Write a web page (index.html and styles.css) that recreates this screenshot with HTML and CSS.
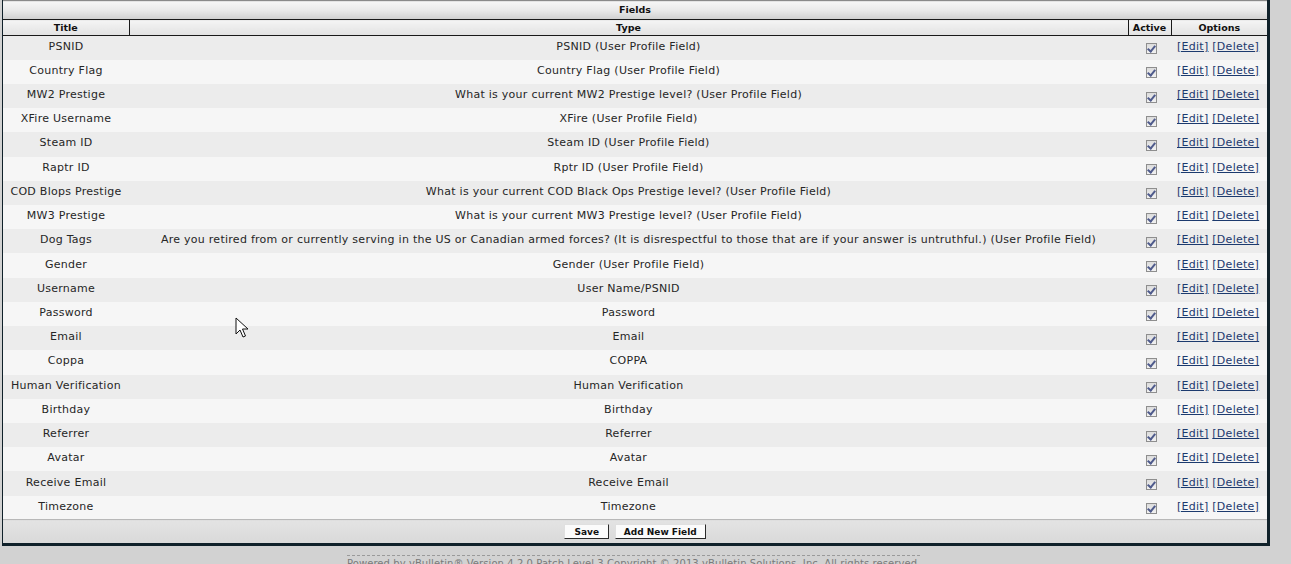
FILE: index.html
```html
<!DOCTYPE html>
<html>
<head>
<meta charset="utf-8">
<link rel="stylesheet" href="styles.css">
</head>
<body>
<div class="panel">
  <table class="grid">
    <colgroup>
      <col class="c-title"><col class="c-type"><col class="c-active"><col class="c-opts">
    </colgroup>
    <thead>
      <tr class="caption"><th colspan="4">Fields</th></tr>
      <tr class="heads"><th>Title</th><th>Type</th><th>Active</th><th>Options</th></tr>
    </thead>
    <tbody>
      <tr><td>PSNID</td><td>PSNID (User Profile Field)</td><td class="act"><span class="chk"></span></td><td class="opt"><a href="#">[Edit]</a> <a href="#">[Delete]</a></td></tr>
      <tr><td>Country Flag</td><td>Country Flag (User Profile Field)</td><td class="act"><span class="chk"></span></td><td class="opt"><a href="#">[Edit]</a> <a href="#">[Delete]</a></td></tr>
      <tr><td>MW2 Prestige</td><td>What is your current MW2 Prestige level? (User Profile Field)</td><td class="act"><span class="chk"></span></td><td class="opt"><a href="#">[Edit]</a> <a href="#">[Delete]</a></td></tr>
      <tr><td>XFire Username</td><td>XFire (User Profile Field)</td><td class="act"><span class="chk"></span></td><td class="opt"><a href="#">[Edit]</a> <a href="#">[Delete]</a></td></tr>
      <tr><td>Steam ID</td><td>Steam ID (User Profile Field)</td><td class="act"><span class="chk"></span></td><td class="opt"><a href="#">[Edit]</a> <a href="#">[Delete]</a></td></tr>
      <tr><td>Raptr ID</td><td>Rptr ID (User Profile Field)</td><td class="act"><span class="chk"></span></td><td class="opt"><a href="#">[Edit]</a> <a href="#">[Delete]</a></td></tr>
      <tr><td>COD Blops Prestige</td><td>What is your current COD Black Ops Prestige level? (User Profile Field)</td><td class="act"><span class="chk"></span></td><td class="opt"><a href="#">[Edit]</a> <a href="#">[Delete]</a></td></tr>
      <tr><td>MW3 Prestige</td><td>What is your current MW3 Prestige level? (User Profile Field)</td><td class="act"><span class="chk"></span></td><td class="opt"><a href="#">[Edit]</a> <a href="#">[Delete]</a></td></tr>
      <tr><td>Dog Tags</td><td>Are you retired from or currently serving in the US or Canadian armed forces? (It is disrespectful to those that are if your answer is untruthful.) (User Profile Field)</td><td class="act"><span class="chk"></span></td><td class="opt"><a href="#">[Edit]</a> <a href="#">[Delete]</a></td></tr>
      <tr><td>Gender</td><td>Gender (User Profile Field)</td><td class="act"><span class="chk"></span></td><td class="opt"><a href="#">[Edit]</a> <a href="#">[Delete]</a></td></tr>
      <tr><td>Username</td><td>User Name/PSNID</td><td class="act"><span class="chk"></span></td><td class="opt"><a href="#">[Edit]</a> <a href="#">[Delete]</a></td></tr>
      <tr><td>Password</td><td>Password</td><td class="act"><span class="chk"></span></td><td class="opt"><a href="#">[Edit]</a> <a href="#">[Delete]</a></td></tr>
      <tr><td>Email</td><td>Email</td><td class="act"><span class="chk"></span></td><td class="opt"><a href="#">[Edit]</a> <a href="#">[Delete]</a></td></tr>
      <tr><td>Coppa</td><td>COPPA</td><td class="act"><span class="chk"></span></td><td class="opt"><a href="#">[Edit]</a> <a href="#">[Delete]</a></td></tr>
      <tr><td>Human Verification</td><td>Human Verification</td><td class="act"><span class="chk"></span></td><td class="opt"><a href="#">[Edit]</a> <a href="#">[Delete]</a></td></tr>
      <tr><td>Birthday</td><td>Birthday</td><td class="act"><span class="chk"></span></td><td class="opt"><a href="#">[Edit]</a> <a href="#">[Delete]</a></td></tr>
      <tr><td>Referrer</td><td>Referrer</td><td class="act"><span class="chk"></span></td><td class="opt"><a href="#">[Edit]</a> <a href="#">[Delete]</a></td></tr>
      <tr><td>Avatar</td><td>Avatar</td><td class="act"><span class="chk"></span></td><td class="opt"><a href="#">[Edit]</a> <a href="#">[Delete]</a></td></tr>
      <tr><td>Receive Email</td><td>Receive Email</td><td class="act"><span class="chk"></span></td><td class="opt"><a href="#">[Edit]</a> <a href="#">[Delete]</a></td></tr>
      <tr><td>Timezone</td><td>Timezone</td><td class="act"><span class="chk"></span></td><td class="opt"><a href="#">[Edit]</a> <a href="#">[Delete]</a></td></tr>
    </tbody>
    <tfoot>
      <tr class="foot"><td colspan="4"><button class="btn btn-save">Save</button> <button class="btn">Add New Field</button></td></tr>
    </tfoot>
  </table>
</div>
<div class="copyright">Powered by vBulletin® Version 4.2.0 Patch Level 3 Copyright © 2013 vBulletin Solutions, Inc. All rights reserved.</div>
<svg class="cursor" width="14" height="22" viewBox="0 0 14 22"><path d="M1 1 L1 17 L5 13 L8 20 L10.5 19 L7.5 12 L13 12 Z" fill="#fff" stroke="#111" stroke-width="1"/></svg>
</body>
</html>
```
FILE: styles.css
```css
html, body {
  margin: 0;
  padding: 0;
}
body {
  background: #d2d2d2;
  font-family: "DejaVu Sans", Verdana, sans-serif;
  font-size: 11px;
  color: #222;
  width: 1291px;
  height: 564px;
  overflow: hidden;
  position: relative;
}
.panel {
  margin-left: 2px;
  width: 1264px;
  border-left: 1px solid #10212a;
  border-right: 3px solid #10212a;
  border-bottom: 3px solid #10212a;
  background: #f4f4f4;
}
.grid {
  width: 100%;
  border-collapse: collapse;
  table-layout: fixed;
}
.c-title { width: 126px; }
.c-type { width: 999px; }
.c-active { width: 43px; }
.c-opts { width: 96px; }

.caption { height: 19px; }
.caption th {
  border-top: 1px solid #8a8a8a;
  border-bottom: 1px solid #1a1a1a;
  background: linear-gradient(#f6f6f6, #e9e9e9 50%, #cfcfcf);
  font-size: 9.5px;
  line-height: 12px;
  font-weight: bold;
  color: #111;
  padding: 0;
}
.heads { height: 16px; }
.heads th {
  padding: 0;
  border: 1px solid #1a1a1a;
  border-top: none;
  background: linear-gradient(#f4f4f4, #e2e2e2);
  font-size: 9.5px;
  line-height: 12px;
  font-weight: bold;
  color: #111;
}
.heads th:first-child { border-left: none; }
.heads th:last-child { border-right: none; }

tbody tr { height: 24.22px; }
tbody td {
  padding: 0 0 3px;
  line-height: 13px;
  text-align: center;
  vertical-align: middle;
  color: #262626;
  white-space: nowrap;
  letter-spacing: 0.27px;
}
tbody tr:nth-child(odd) { background: #ececec; }
tbody tr:nth-child(even) { background: #f6f6f6; }

.act { padding: 2px 0 0 4px; }
.chk {
  display: block;
  margin: 0 auto;
  width: 11px;
  height: 11px;
  box-sizing: border-box;
  border: 1px solid #8e8e8e;
  background: linear-gradient(#dcdcdc, #f2f2f2);
  position: relative;
}
.chk::after {
  content: "";
  position: absolute;
  left: 2px;
  top: 0;
  width: 3px;
  height: 6px;
  border-right: 2px solid #4f5b8c;
  border-bottom: 2px solid #4f5b8c;
  transform: rotate(40deg);
}
.opt { text-align: left; padding-left: 6px; }
.opt a {
  color: #1c3a6e;
  text-decoration: underline;
}

.foot { height: 23px; }
.foot td {
  padding: 0;
  text-align: center;
  border-top: 1px solid #b8b8b8;
  background: linear-gradient(#e3e3e3, #d9d9d9);
}
.btn {
  font-family: "DejaVu Sans", Verdana, sans-serif;
  font-size: 9px;
  font-weight: bold;
  line-height: 11px;
  color: #111;
  background: #fbfbfb;
  border: 1px solid;
  border-color: #e0e0e0 #2a2a2a #2a2a2a #e0e0e0;
  padding: 1px 8px 0;
  height: 15px;
  margin: 0 1px;
  vertical-align: middle;
}
.btn-save { min-width: 45px; }
.copyright {
  width: 573px;
  margin: 9px 0 0 347px;
  border-top: 1px dashed #9a9a9a;
  padding-top: 2px;
  font-size: 10px;
  letter-spacing: 0.07px;
  color: #7a7a7a;
  white-space: nowrap;
}
.cursor {
  position: absolute;
  left: 235px;
  top: 317px;
}
```
